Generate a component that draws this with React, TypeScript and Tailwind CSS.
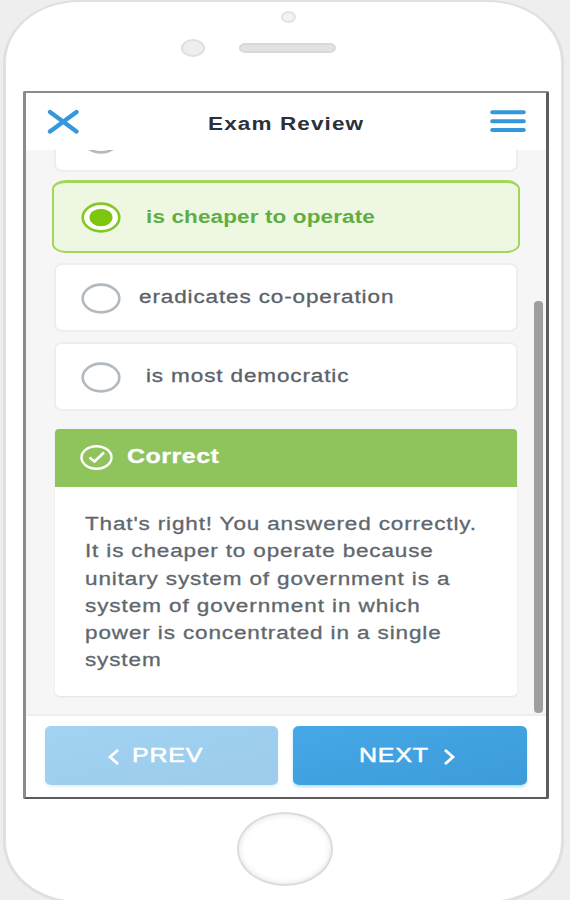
import React from 'react';

import clsx from 'clsx';

const OPTIONS = [
  { id: 'b', title: 'is cheaper to operate', selected: true, className: 'pl-[45px] tracking-[0.1px]' },
  { id: 'c', title: 'eradicates co-operation', selected: false, className: 'pl-[38px] tracking-[0.7px]' },
  { id: 'd', title: 'is most democratic', selected: false, className: 'pl-[45px] tracking-[0.7px]' },
];

const EXPLANATION = [
  { text: "That's right! You answered correctly.", className: 'tracking-[0.68px]' },
  { text: 'It is cheaper to operate because', className: 'tracking-[0.68px]' },
  { text: 'unitary system of government is a', className: 'tracking-[0.7px]' },
  { text: 'system of government in which', className: 'tracking-[0.74px]' },
  { text: 'power is concentrated in a single', className: 'tracking-[0.7px]' },
  { text: 'system', className: 'tracking-[0.7px]' },
];

interface WideProps {
  className?: string;
  children: React.ReactNode;
}

const Wide: React.FC<WideProps> = ({ className, children }) => (
  <span
    className={clsx(
      'block origin-left scale-x-125 whitespace-nowrap',
      className
    )}
  >
    {children}
  </span>
);

interface OptionProps {
  title: string;
  selected: boolean;
  className: string;
}

const Radio: React.FC<{ selected: boolean }> = ({ selected }) => (
  <svg width="40" height="31" viewBox="0 0 40 31" className="mt-[1px] shrink-0">
    <ellipse
      cx="20"
      cy="15.5"
      rx="18.3"
      ry="13.9"
      fill="#fff"
      stroke={selected ? '#84c822' : '#b2babf'}
      strokeWidth="2.6"
    />
    {selected && <ellipse cx="20" cy="15.5" rx="11.5" ry="8.8" fill="#7cc60d" />}
  </svg>
);

const Option: React.FC<OptionProps> = ({ title, selected, className }) => (
  <div
    className={clsx(
      'flex items-center',
      selected
        ? '-mx-[2px] h-[73px] rounded-[14px/9px] border-2 border-t-[3px] border-[#a3d55b] bg-[#eef7e2] pl-[27px]'
        : 'h-[69px] rounded-[9px/7px] border-2 border-[#eeeeee] bg-white pl-[25px]'
    )}
  >
    <Radio selected={selected} />
    <div className={clsx('-ml-[20px]', selected ? 'mt-0' : '-mt-[1px]')}>
      <div className={className}>
        <Wide
          className={clsx(
            selected
              ? 'font-bold text-[#5fae42]'
              : 'text-[#5a6268] [-webkit-text-stroke:0.3px_#5a6268]'
          )}
        >
          {title}
        </Wide>
      </div>
    </div>
  </div>
);

const Header: React.FC = () => (
  <div className="flex h-[57px] shrink-0 items-center bg-white pr-[20px] pl-[20px]">
    <svg width="34" height="26" viewBox="0 0 34 26" className="shrink-0">
      <path
        d="M4 3 L30.5 22.5 M30.5 3 L4 22.5"
        stroke="#3498db"
        strokeWidth="4.4"
        strokeLinecap="round"
      />
    </svg>
    <div className="ml-[128px] flex-1 pt-[5px] tracking-[0.9px]">
      <Wide className="font-bold text-[#2b303b]">Exam Review</Wide>
    </div>
    <svg width="36" height="24" viewBox="0 0 36 24" className="shrink-0">
      <path
        d="M2.2 2.2 H33.8 M2.2 11.2 H33.8 M2.2 20 H33.8"
        stroke="#3498db"
        strokeWidth="4"
        strokeLinecap="round"
      />
    </svg>
  </div>
);

const Feedback: React.FC = () => (
  <div className="mx-[1px] mt-[18px] h-[267px] rounded-[6px/4px] bg-white shadow-[0_1px_2px_#e2e2e2]">
    <div className="flex h-[58px] items-center rounded-t-[4px] bg-[#8fc45d] pl-[25px]">
      <svg width="33" height="25" viewBox="0 0 33 25" fill="none" stroke="#fff" className="-mt-[2px]">
        <ellipse cx="16.5" cy="12.5" rx="15" ry="11.2" strokeWidth="2.4" />
        <path d="M9.5 12.5 L14.5 16.5 L24 7.5" strokeWidth="2.6" />
      </svg>
      <div className="-mt-[5px] ml-[14px] text-[20px] tracking-[0.4px]">
        <Wide className="font-bold text-white [-webkit-text-stroke:0.3px_#fff]">
          Correct
        </Wide>
      </div>
    </div>
    <div className="pt-[24px] pl-[30px] leading-[27.3px] text-[#5f676d] [-webkit-text-stroke:0.3px_#5f676d]">
      {EXPLANATION.map((line) => (
        <Wide key={line.text} className={line.className}>
          {line.text}
        </Wide>
      ))}
    </div>
  </div>
);

const Footer: React.FC = () => (
  <div className="flex h-[81px] shrink-0 gap-[15px] bg-white pt-[10px] pl-[18.5px] text-[20px] text-white">
    <button className="flex h-[59px] w-[233.5px] items-center rounded-[6px/5px] bg-linear-to-br from-[#a2d3f2] to-[#9ccbeb] pl-[62px] text-left shadow-[0_2px_3px_#e3f2fc]">
      <svg width="13" height="18" viewBox="0 0 13 18" className="mt-[2px]">
        <path d="M11 2 L3 9 L11 16" fill="none" stroke="#fff" strokeWidth="2.8" />
      </svg>
      <div className="-mt-[2px] ml-[12px]">
        <Wide className="tracking-[0.6px] [-webkit-text-stroke:0.5px_#fff]">PREV</Wide>
      </div>
    </button>
    <button className="flex h-[59px] w-[233.5px] items-center rounded-[6px/5px] bg-linear-to-br from-[#46a8e7] to-[#3d9bd9] pl-[66px] text-left shadow-[0_2px_3px_#b9e0f9]">
      <div className="-mt-[2px] w-[84px] shrink-0">
        <Wide className="w-max tracking-[0.6px] [-webkit-text-stroke:0.5px_#fff]">NEXT</Wide>
      </div>
      <svg width="13" height="18" viewBox="0 0 13 18" className="mt-[2px]">
        <path d="M2 2 L10 9 L2 16" fill="none" stroke="#fff" strokeWidth="2.8" />
      </svg>
    </button>
  </div>
);

const App: React.FC = () => {
  return (
    <div className="h-[900px] w-[570px] overflow-hidden bg-[#eeeeee] pl-[3px] font-['Liberation_Sans',Arial,sans-serif] text-[18px]">
      <div className="h-[904px] w-[561px] rounded-[76px/62px] border-3 border-t-2 border-[#e0e0e0] bg-white">
        <div className="ml-[275px] pt-[9px]">
          <div className="h-[12px] w-[15px] rounded-[50%] border-2 border-[#e2e2e2] bg-[#f3f3f3]" />
        </div>
        <div className="mt-[16px] ml-[175px] flex h-[18px] items-center gap-[34px]">
          <div className="h-[18px] w-[24px] rounded-[50%] border-2 border-[#dedede] bg-[#eeeeee]" />
          <div className="h-[10px] w-[97px] rounded-[6px/5px] border-2 border-[#d9d9d9] bg-[#e2e2e2]" />
        </div>
        <div className="mt-[34px] ml-[17px] flex h-[708px] w-[526px] flex-col rounded-[2px] border-t-2 border-r-3 border-b-2 border-l-3 border-t-[#8b8b8b] border-r-[#5d5d5d] border-b-[#5a5a5a] border-l-[#8b8b8b]">
          <Header />
          <div className="flex flex-1 overflow-hidden border-b-2 border-[#eeeeee] bg-[#f6f6f6] pl-[28px]">
            <div className="w-[464px] shrink-0">
              <div className="flex h-[22px] flex-col justify-end">
                <div className="flex h-[69px] shrink-0 items-center rounded-[9px/7px] border-2 border-[#eeeeee] bg-white pl-[25px]">
                  <Radio selected={false} />
                </div>
              </div>
              <div className="mt-[8px] flex flex-col gap-[10px]">
                {OPTIONS.map((option) => (
                  <Option
                    key={option.id}
                    title={option.title}
                    selected={option.selected}
                    className={option.className}
                  />
                ))}
              </div>
              <Feedback />
            </div>
            <div className="mt-[151px] ml-[16px] h-[412px] w-[9px] rounded-[4px] bg-[#9e9e9e]" />
          </div>
          <Footer />
        </div>
        <div className="mt-[13px] ml-[231px] h-[74px] w-[96px] rounded-[50%] border-2 border-[#dcdcdc] bg-white shadow-[inset_0_0_6px_#e2e2e2]" />
      </div>
    </div>
  );
};

export default App;
